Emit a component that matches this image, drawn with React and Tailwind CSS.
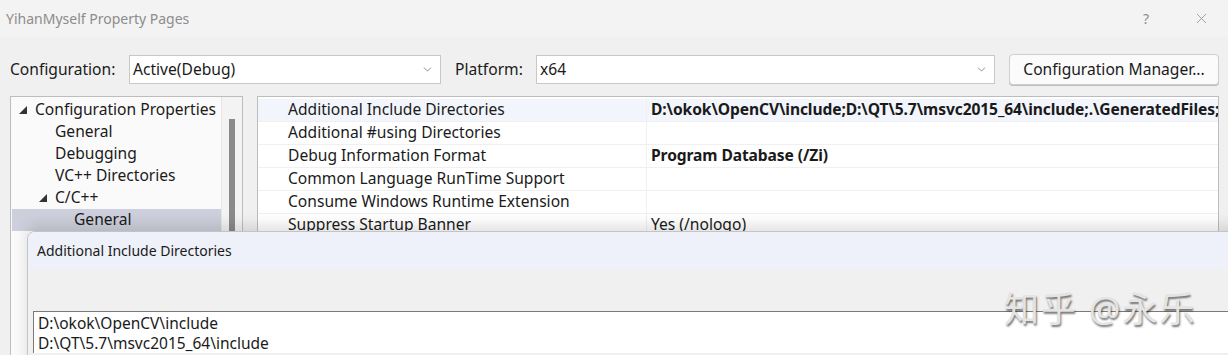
import { ChevronDown, X } from 'lucide-react'

const tree = [
  { label: 'Configuration Properties', indent: 'pl-[8px]', caret: true },
  { label: 'General', indent: 'pl-[44px]' },
  { label: 'Debugging', indent: 'pl-[44px]' },
  { label: 'VC++ Directories', indent: 'pl-[44px]' },
  { label: 'C/C++', indent: 'pl-[28px]', caret: true },
  { label: 'General', indent: 'pl-[62px]', selected: true },
]

const props = [
  { name: 'Additional Include Directories', value: 'D:\\okok\\OpenCV\\include;D:\\QT\\5.7\\msvc2015_64\\include;.\\GeneratedFiles;', bold: true, active: true },
  { name: 'Additional #using Directories', value: '' },
  { name: 'Debug Information Format', value: 'Program Database (/Zi)', bold: true },
  { name: 'Common Language RunTime Support', value: '' },
  { name: 'Consume Windows Runtime Extension', value: '' },
  { name: 'Suppress Startup Banner', value: 'Yes (/nologo)' },
]

function Select({ value, className }) {
  return (
    <div className={`flex h-[29px] items-center justify-between border border-[#c8c8c8] bg-white pl-[3px] pr-[6px] ${className}`}>
      <span>{value}</span>
      <ChevronDown size={13} strokeWidth={1.2} className="text-[#555]" />
    </div>
  )
}

export default function App() {
  return (
    <div className="relative h-[355px] w-[1228px] overflow-hidden bg-[#f0f0f0] text-[15.6px] text-[#1a1a1a]" style={{ fontFamily: '"Noto Sans", "Noto Sans CJK SC", sans-serif' }}>
      {/* title bar */}
      <div className="flex h-[37px] items-center justify-between bg-[#f3f3f3] pl-[6px] pr-[18px]">
        <span className="text-[14px] text-[#8c8c8c]">YihanMyself Property Pages</span>
        <div className="flex items-center gap-[44px] text-[#8c8c8c]">
          <span className="text-[14px]">?</span>
          <X size={17} strokeWidth={1.1} />
        </div>
      </div>

      {/* configuration row */}
      <div className="mt-[17px] flex h-[31px] items-center pl-[10px] pr-[9px]">
        <span className="w-[119px]">Configuration:</span>
        <Select value="Active(Debug)" className="w-[312px]" />
        <span className="ml-[14px] w-[81px]">Platform:</span>
        <Select value="x64" className="w-[459px]" />
        <button className="ml-[14px] flex h-[31px] flex-1 items-center justify-center rounded-[4px] border border-[#cfcfcf] bg-[#fbfbfb] shadow-[0_1px_0_#bdbdbd]">
          Configuration Manager...
        </button>
      </div>

      {/* panels */}
      <div className="mt-[11px] flex gap-[14px] pl-[10px] pr-[9px]">
        <div className="flex h-[260px] w-[233px] border border-[#bdbdbd] bg-[#fafafa]">
          <div className="flex-1 pt-[2px]">
            {tree.map((t, i) => (
              <div key={i} className={`flex h-[22px] items-center whitespace-nowrap ${t.indent} ${t.selected ? 'ml-[1px] bg-[#cdd0dc]' : ''}`}>
                {t.caret && (
                  <svg width="8" height="8" viewBox="0 0 8 8" className="mr-[8px] shrink-0">
                    <path d="M8 0 L8 8 L0 8 Z" fill="#333" />
                  </svg>
                )}
                <span>{t.label}</span>
              </div>
            ))}
          </div>
          <div className="flex w-[21px] justify-center border-l border-[#e6e6e6] bg-[#f3f3f3] pt-[22px]">
            <div className="h-[200px] w-[6px] bg-[#8a8a8a]" />
          </div>
        </div>

        <div className="h-[260px] flex-1 overflow-hidden border border-[#bdbdbd] bg-white pt-[2px]">
          {props.map((p, i) => (
            <div key={i} className={`flex h-[23px] items-center border-b border-[#f0f0f0] ${p.active ? 'bg-[#f2f5fb]' : ''}`}>
              <div className="w-[389px] shrink-0 border-r border-[#f0f0f0] pl-[30px] whitespace-nowrap">{p.name}</div>
              <div className={`overflow-hidden whitespace-nowrap pl-[4px] ${p.bold ? 'font-bold tracking-[-0.1px]' : ''}`}>{p.value}</div>
            </div>
          ))}
        </div>
      </div>

      {/* overlay dialog */}
      <div className="absolute left-[27px] top-[231px] h-[140px] w-[1220px] overflow-hidden rounded-tl-[8px] border border-[#c4c4c4] bg-[#f0f0f0] text-[15.5px] shadow-[0_-6px_14px_rgba(0,0,0,0.12)]">
        <div className="flex h-[37px] items-center bg-[#eef1f9] pl-[9px] text-[14px]">Additional Include Directories</div>
        <div className="h-[42px]" />
        <div className="ml-[5px] border-l border-t border-[#7a7a7a] bg-white pl-[4px] pt-[1px] leading-[20px]">
          <div>D:\okok\OpenCV\include</div>
          <div>D:\QT\5.7\msvc2015_64\include</div>
        </div>
      </div>

      {/* watermark */}
      <div className="absolute left-[1004px] top-[283px] text-[35px] tracking-[2px] text-[#e4e4e4] [text-shadow:1px_2px_2px_rgba(0,0,0,0.55)]">
        知乎 @永乐
      </div>
    </div>
  )
}
